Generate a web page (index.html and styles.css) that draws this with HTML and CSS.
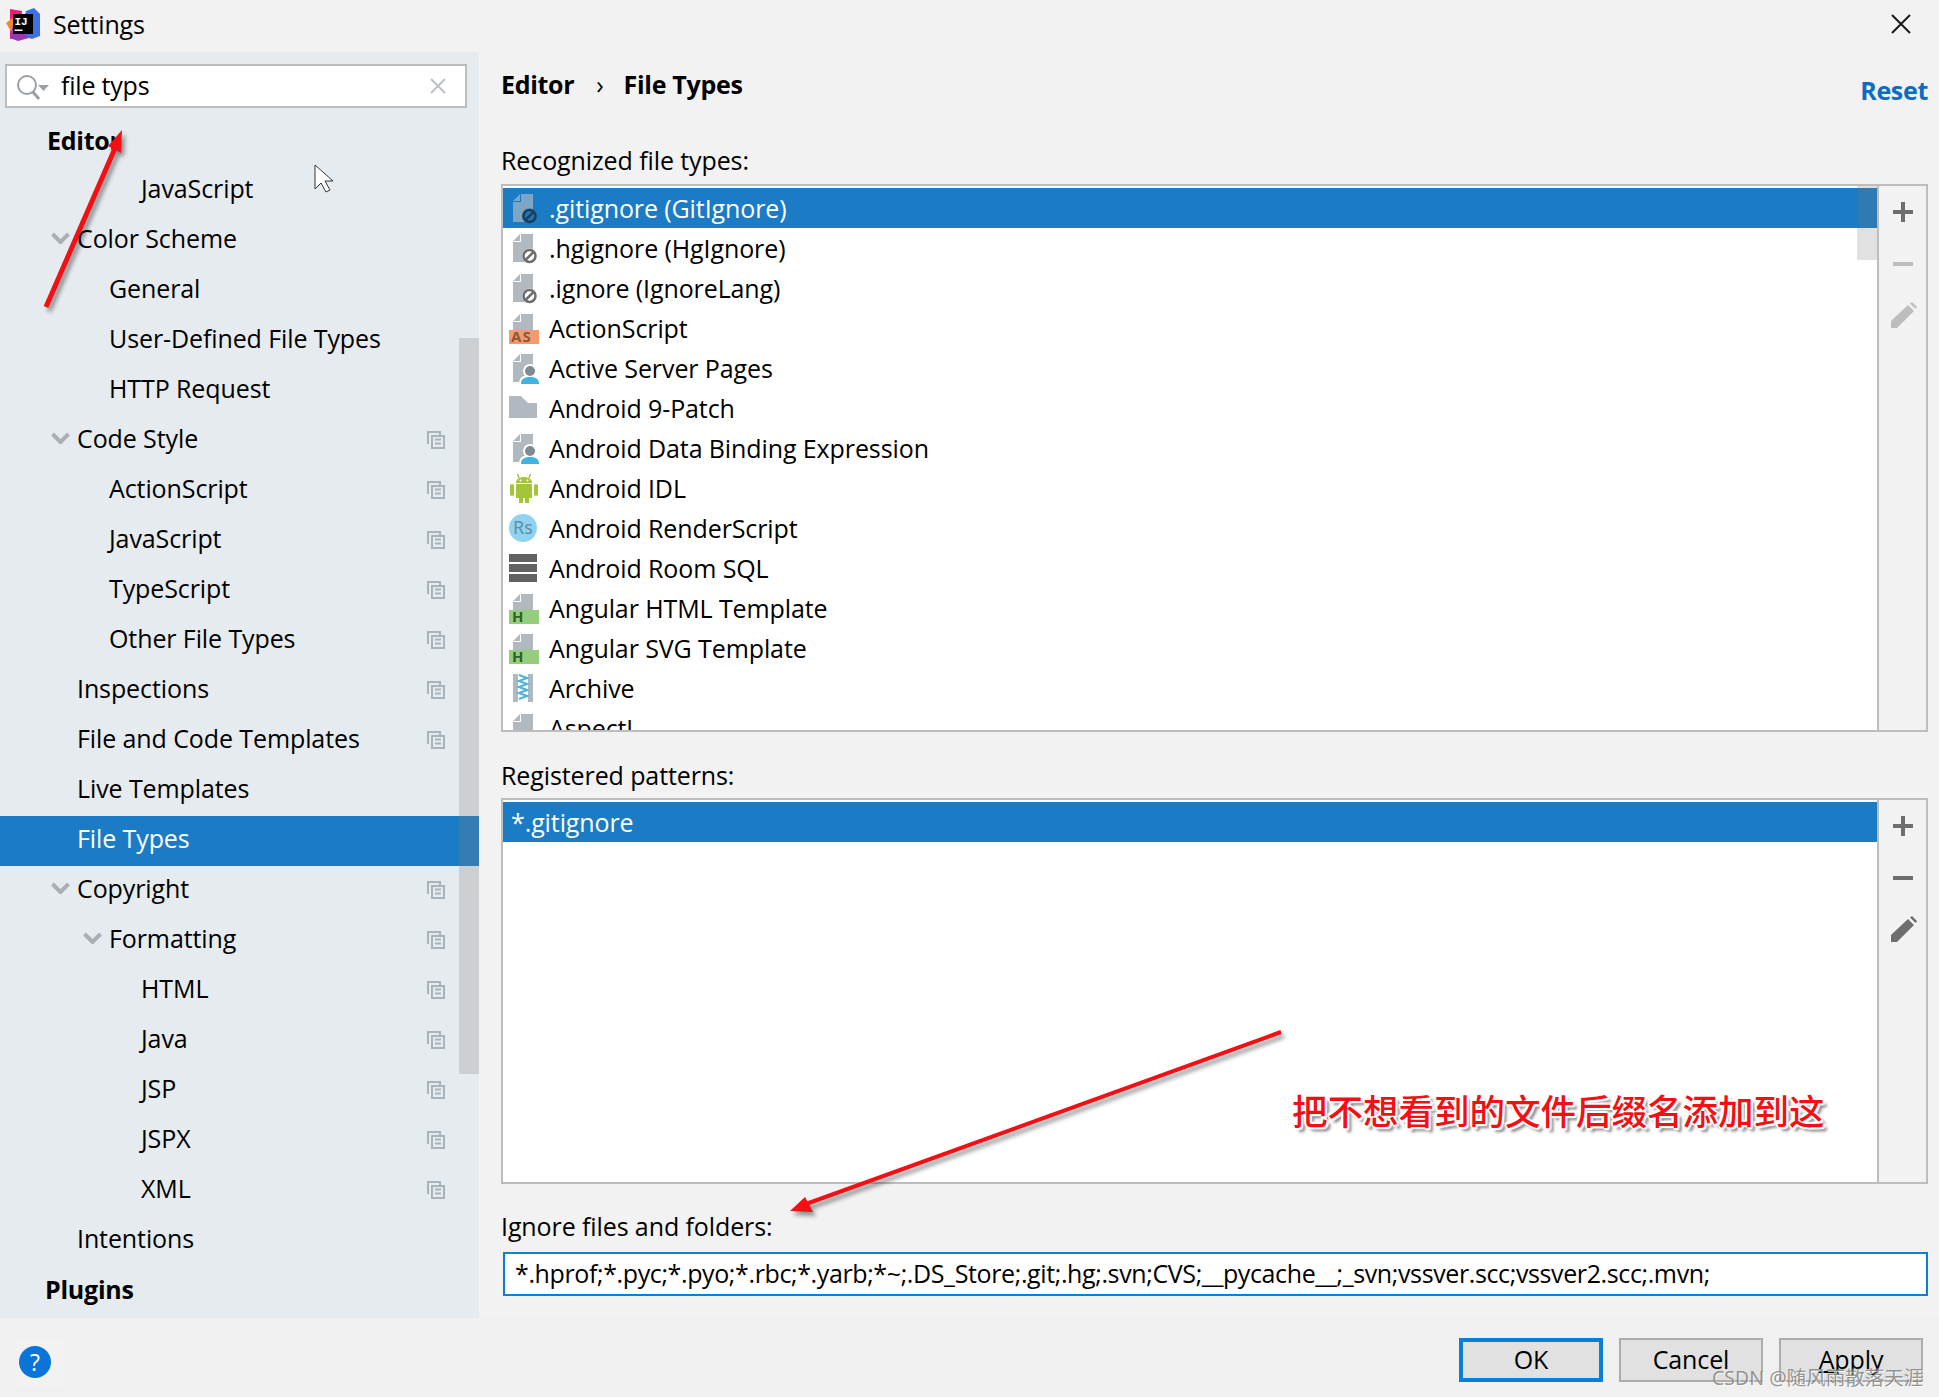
FILE: index.html
```html
<!DOCTYPE html>
<html lang="en">
<head>
<meta charset="utf-8">
<title>Settings</title>
<link rel="stylesheet" href="styles.css">
</head>
<body>
<svg class="defs" width="0" height="0" aria-hidden="true">
  <defs>
    <symbol id="copy" viewBox="0 0 18 18">
      <path d="M1 13V1h12v3M5 5h12v12H5z" fill="none" stroke="#a8b4bb" stroke-width="2"/>
      <path d="M8 8.5h6M8 12.5h6" stroke="#a8b4bb" stroke-width="2"/>
    </symbol>
    <symbol id="chev" viewBox="0 0 19 12">
      <path d="M1.5 2l8 8 8-8" fill="none" stroke="#a9afb5" stroke-width="4"/>
    </symbol>
    <symbol id="plus" viewBox="0 0 20 20"><path d="M10 0v20M0 10h20" stroke="currentColor" stroke-width="4"/></symbol>
    <symbol id="minus" viewBox="0 0 20 20"><path d="M0 10h20" stroke="currentColor" stroke-width="4"/></symbol>
    <symbol id="pencil" viewBox="0 0 26 26"><path d="M0 19L17 3l6 6L6 26H0zM19 1.500l2-1.500 5 5-1.500 2z" fill="currentColor"/></symbol>
    <symbol id="file" viewBox="0 0 30 32">
      <path d="M4 7l7-7v7zM12 0h12v28H4V8h8z" fill="#b0b9bf"/>
    </symbol>
    <symbol id="ban" viewBox="0 0 30 32">
      <path d="M4 7l7-7v7zM12 0h12v28H4V8h8z" fill="#b0b9bf"/>
      <circle cx="20.500" cy="22" r="7.500" fill="#fff"/>
      <circle cx="20.500" cy="22" r="6" fill="none" stroke="#6e6e6e" stroke-width="2.500"/>
      <path d="M16.500 26l8-8" stroke="#6e6e6e" stroke-width="2.500"/>
    </symbol>
    <symbol id="bansel" viewBox="0 0 30 32">
      <path d="M4 7l7-7v7zM12 0h12v28H4V8h8z" fill="#7fa5c4"/>
      <circle cx="20.500" cy="22" r="7.500" fill="#1a7ac4"/>
      <circle cx="20.500" cy="22" r="6" fill="none" stroke="#1d3f5a" stroke-width="2.500"/>
      <path d="M16.500 26l8-8" stroke="#1d3f5a" stroke-width="2.500"/>
    </symbol>
    <symbol id="person" viewBox="0 0 30 32">
      <path d="M4 7l7-7v7zM12 0h12v28H4V8h8z" fill="#b0b9bf"/>
      <circle cx="21" cy="17" r="7" fill="#fff"/>
      <path d="M10 30c0-7 4-9 11-9s9 2 9 9z" fill="#fff"/>
      <circle cx="21" cy="17" r="5" fill="#7f8b91"/>
      <path d="M12 30c0-5 3-7 9-7s9 2 9 7z" fill="#3fb4e0"/>
    </symbol>
    <symbol id="folder" viewBox="0 0 30 32">
      <path d="M0 2h12l7 7h9v15H0z" fill="#b0b9bf"/>
    </symbol>
    <symbol id="android" viewBox="0 0 30 32">
      <g fill="#a4c439">
        <path d="M7 9c0-4 4-6 8-6s8 2 8 6z"/>
        <path d="M7 10h16v14h-3v5h-4v-5h-2v5h-4v-5H7z" />
        <rect x="1" y="10" width="4" height="12" rx="2"/>
        <rect x="25" y="10" width="4" height="12" rx="2"/>
      </g>
      <path d="M10 4L8.500 0M20 4l1.500-4" stroke="#a4c439" stroke-width="1.500"/>
      <circle cx="11.500" cy="6.500" r="1" fill="#fff"/><circle cx="18.500" cy="6.500" r="1" fill="#fff"/>
    </symbol>
    <symbol id="rooms" viewBox="0 0 30 32">
      <path d="M0 0h28v8H0zM0 10h28v8H0zM0 20h28v8H0z" fill="#616161"/>
    </symbol>
    <symbol id="zip" viewBox="0 0 30 32">
      <path d="M4 0h20v28H4z" fill="#b0b9bf"/>
      <path d="M9 0h10v28H9z" fill="#fff"/>
      <path d="M10 1l8 3-8 3 8 3-8 3 8 3-8 3 8 3-8 3" fill="none" stroke="#4db4dc" stroke-width="2.200"/>
    </symbol>
  </defs>
</svg>

<div class="dialog">
  <header class="titlebar">
    <svg class="logo" width="34" height="34" viewBox="0 0 34 34" aria-hidden="true">
      <path d="M4 2l12 2-2 26-10 2z" fill="#e6207a"/>
      <path d="M0 16l8-6 4 12-6 4z" fill="#f28a22"/>
      <path d="M20 4l8-3 6 6v22l-8 3-12-4z" fill="#3f6fe4"/>
      <path d="M4 31l3-14 16 14-11 3z" fill="#9a35b8"/>
      <rect x="7" y="7" width="20" height="20" fill="#000"/>
      <text class="logo-text" x="8.500" y="18">IJ</text>
      <rect x="8.500" y="22.500" width="8" height="1.500" fill="#fff"/>
    </svg>
    <span class="title">Settings</span>
    <svg class="close" width="20" height="20" viewBox="0 0 20 20" aria-hidden="true"><path d="M1 1l18 18M19 1L1 19" stroke="#1a1a1a" stroke-width="2"/></svg>
  </header>

  <div class="content">
    <aside class="sidebar">
      <div class="search">
        <svg class="search-icon" width="34" height="28" viewBox="0 0 34 28" aria-hidden="true">
          <circle cx="11" cy="11" r="9" fill="none" stroke="#9aa0a4" stroke-width="2"/>
          <path d="M17 18l6 7" stroke="#9aa0a4" stroke-width="3"/>
          <path d="M22 11h11l-5.500 6z" fill="#9aa0a4"/>
        </svg>
        <span class="search-text">file typs</span>
        <svg class="search-clear" width="16" height="16" viewBox="0 0 16 16" aria-hidden="true"><path d="M1 1l14 14M15 1L1 15" stroke="#bcc1c4" stroke-width="2"/></svg>
      </div>
      <div class="tree">
        <div class="row bold l0a">Editor</div>
        <div class="row l3">JavaScript</div>
        <div class="row l1"><svg class="chev"><use href="#chev"/></svg>Color Scheme</div>
        <div class="row l2">General</div>
        <div class="row l2">User-Defined File Types</div>
        <div class="row l2">HTTP Request</div>
        <div class="row l1"><svg class="chev"><use href="#chev"/></svg>Code Style<svg class="copy"><use href="#copy"/></svg></div>
        <div class="row l2">ActionScript<svg class="copy"><use href="#copy"/></svg></div>
        <div class="row l2">JavaScript<svg class="copy"><use href="#copy"/></svg></div>
        <div class="row l2">TypeScript<svg class="copy"><use href="#copy"/></svg></div>
        <div class="row l2">Other File Types<svg class="copy"><use href="#copy"/></svg></div>
        <div class="row l1">Inspections<svg class="copy"><use href="#copy"/></svg></div>
        <div class="row l1">File and Code Templates<svg class="copy"><use href="#copy"/></svg></div>
        <div class="row l1">Live Templates</div>
        <div class="row l1 selected">File Types</div>
        <div class="row l1"><svg class="chev"><use href="#chev"/></svg>Copyright<svg class="copy"><use href="#copy"/></svg></div>
        <div class="row l2"><svg class="chev"><use href="#chev"/></svg>Formatting<svg class="copy"><use href="#copy"/></svg></div>
        <div class="row l3">HTML<svg class="copy"><use href="#copy"/></svg></div>
        <div class="row l3">Java<svg class="copy"><use href="#copy"/></svg></div>
        <div class="row l3">JSP<svg class="copy"><use href="#copy"/></svg></div>
        <div class="row l3">JSPX<svg class="copy"><use href="#copy"/></svg></div>
        <div class="row l3">XML<svg class="copy"><use href="#copy"/></svg></div>
        <div class="row l1">Intentions</div>
        <div class="row bold l0">Plugins</div>
      </div>
      <div class="side-scroll"></div>
    </aside>

    <main class="main">
      <div class="head">
        <div class="crumbs"><span>Editor</span><span class="crumb-sep">›</span><span>File Types</span></div>
        <span class="reset">Reset</span>
      </div>

      <div class="label first">Recognized file types:</div>
      <div class="box types">
        <div class="list">
          <div class="item sel"><svg class="ico"><use href="#bansel"/></svg>.gitignore (GitIgnore)</div>
          <div class="item"><svg class="ico"><use href="#ban"/></svg>.hgignore (HgIgnore)</div>
          <div class="item"><svg class="ico"><use href="#ban"/></svg>.ignore (IgnoreLang)</div>
          <div class="item">
            <svg class="ico" viewBox="0 0 30 32"><path d="M4 7l7-7v7zM12 0h12v16H4V8h8z" fill="#b0b9bf"/><rect y="16" width="30" height="14" fill="#f59a6f"/><text class="badge as" x="2" y="28">AS</text></svg>ActionScript</div>
          <div class="item"><svg class="ico"><use href="#person"/></svg>Active Server Pages</div>
          <div class="item"><svg class="ico"><use href="#folder"/></svg>Android 9-Patch</div>
          <div class="item"><svg class="ico"><use href="#person"/></svg>Android Data Binding Expression</div>
          <div class="item"><svg class="ico"><use href="#android"/></svg>Android IDL</div>
          <div class="item">
            <svg class="ico" viewBox="0 0 30 32"><circle cx="14" cy="14" r="14" fill="#8fd3ef"/><text class="rs" x="4" y="20">Rs</text></svg>Android RenderScript</div>
          <div class="item"><svg class="ico"><use href="#rooms"/></svg>Android Room SQL</div>
          <div class="item">
            <svg class="ico" viewBox="0 0 30 32"><path d="M4 7l7-7v7zM12 0h12v16H4V8h8z" fill="#b0b9bf"/><rect y="16" width="30" height="14" fill="#95cd7d"/><text class="badge h" x="3" y="28">H</text></svg>Angular HTML Template</div>
          <div class="item">
            <svg class="ico" viewBox="0 0 30 32"><path d="M4 7l7-7v7zM12 0h12v16H4V8h8z" fill="#b0b9bf"/><rect y="16" width="30" height="14" fill="#95cd7d"/><text class="badge h" x="3" y="28">H</text></svg>Angular SVG Template</div>
          <div class="item"><svg class="ico"><use href="#zip"/></svg>Archive</div>
          <div class="item"><svg class="ico"><use href="#file"/></svg>AspectJ</div>
          <div class="list-scroll"></div>
        </div>
        <div class="tools">
          <svg class="tool t-plus"><use href="#plus"/></svg>
          <svg class="tool t-minus off"><use href="#minus"/></svg>
          <svg class="tool t-pencil off"><use href="#pencil"/></svg>
        </div>
      </div>

      <div class="label">Registered patterns:</div>
      <div class="box patterns">
        <div class="list">
          <div class="item sel plain">*.gitignore</div>
        </div>
        <div class="tools">
          <svg class="tool t-plus"><use href="#plus"/></svg>
          <svg class="tool t-minus"><use href="#minus"/></svg>
          <svg class="tool t-pencil"><use href="#pencil"/></svg>
        </div>
      </div>

      <div class="label ignore">Ignore files and folders:</div>
      <div class="field">*.hprof;*.pyc;*.pyo;*.rbc;*.yarb;*~;.DS_Store;.git;.hg;.svn;CVS;__pycache__;_svn;vssver.scc;vssver2.scc;.mvn;</div>
    </main>
  </div>

  <footer class="footer">
    <div class="help"><span class="help-dot">?</span></div>
    <div class="buttons">
      <span class="btn primary">OK</span>
      <span class="btn">Cancel</span>
      <span class="btn"><u>A</u>pply</span>
    </div>
  </footer>

  <svg class="marks" width="1939" height="1397" viewBox="0 0 1939 1397" aria-hidden="true">
    <g class="arrow">
      <path d="M46 307L116 146" stroke="#f30f13" stroke-width="5" fill="none"/>
      <path d="M122 130L108 146 121 153z" fill="#f30f13"/>
      <path d="M1281 1032L806 1204" stroke="#f30f13" stroke-width="4" fill="none"/>
      <path d="M790 1211L805 1197 813 1212z" fill="#f30f13"/>
    </g>
    <path class="cursor" d="M315 165v24l6-6 5 9 4-2-5-9h8z"/>
  </svg>
  <div class="note">把不想看到的文件后缀名添加到这</div>
  <div class="watermark">CSDN @随风雨散落天涯</div>
</div>
</body>
</html>
```
FILE: styles.css
```css
* { box-sizing: border-box; }
html, body { margin: 0; padding: 0; }
body {
  width: 1939px;
  height: 1397px;
  overflow: hidden;
  background: #f2f2f2;
  color: #000;
  font-family: "Open Sans", "Noto Sans", "Noto Sans CJK SC", sans-serif;
  font-size: 25px;
  letter-spacing: -0.1px;
}
.defs { position: absolute; }
.dialog {
  position: relative;
  width: 1939px;
  height: 1397px;
  display: flex;
  flex-direction: column;
}

/* title bar */
.titlebar {
  height: 52px;
  flex: none;
  display: flex;
  align-items: center;
  padding: 0 28px 4px 6px;
}
.logo { flex: none; }
.logo-text { font: bold 11px "Liberation Mono", monospace; fill: #fff; letter-spacing: 0; }
.title { margin-left: 13px; }
.close { margin-left: auto; }

/* content */
.content { flex: none; height: 1266px; display: flex; }
.sidebar {
  position: relative;
  width: 479px;
  flex: none;
  background: #e6ebef;
  padding-top: 12px;
}
.search {
  width: 462px;
  height: 44px;
  margin-left: 5px;
  border: 2px solid #bdbdbd;
  background: #fff;
  display: flex;
  align-items: center;
  padding: 0 19px 0 9px;
}
.search-icon { flex: none; margin-top: 4px; }
.search-text { margin-left: 11px; padding-bottom: 2px; letter-spacing: -0.2px; }
.search-clear { margin-left: auto; }
.tree { padding-top: 8px; }
.row {
  height: 50px;
  display: flex;
  align-items: center;
  padding-right: 34px;
  padding-bottom: 6px;
  white-space: nowrap;
}
.row.l0a { padding-left: 47px; padding-bottom: 2px; }
.row.l0 { padding-left: 45px; padding-bottom: 4px; }
.row.l1 { padding-left: 77px; }
.row.l2 { padding-left: 109px; }
.row.l3 { padding-left: 141px; }
.bold { font-weight: 700; letter-spacing: -0.25px; }
.selected { background: #1b7bc4; color: #fff; }
.chev { width: 19px; height: 12px; flex: none; margin-left: -26px; margin-right: 7px; }
.copy { width: 18px; height: 18px; flex: none; margin-left: auto; margin-top: 3px; }
.side-scroll {
  position: absolute;
  right: 0;
  top: 286px;
  width: 20px;
  height: 736px;
  background: rgba(128, 128, 128, 0.25);
}

/* main */
.main { flex: 1; padding: 0 11px 0 22px; min-width: 0; }
.head { display: flex; justify-content: space-between; height: 50px; padding-top: 15px; }
.crumbs { display: flex; font-weight: 700; letter-spacing: -0.3px; }
.crumb-sep { font-weight: 400; margin: 0 20px 0 22px; }
.reset { font-weight: 700; letter-spacing: -0.3px; color: #0a6cc4; margin-top: 6px; }
.label { height: 34px; line-height: 34px; white-space: nowrap; margin-top: 26px; margin-bottom: 6px; }
.main > .label.first { margin-top: 41px; margin-bottom: 7px; }
.box {
  width: 1427px;
  display: flex;
  border: 2px solid #bdbdbd;
}
.types { height: 548px; }
.patterns { height: 386px; }
.list {
  position: relative;
  flex: 1;
  min-width: 0;
  overflow: hidden;
  background: #fff;
  padding-top: 2px;
  border-right: 2px solid #bdbdbd;
}
.item {
  height: 40px;
  line-height: 40px;
  display: flex;
  align-items: center;
  padding-left: 6px;
  white-space: nowrap;
}
.item.plain { padding-left: 8px; }
.item.sel { background: #1b7bc4; color: #fff; }
.ico { width: 30px; height: 32px; flex: none; margin-right: 10px; margin-top: 4px; }
.badge { font: 700 15px "Noto Sans", sans-serif; letter-spacing: 1px; }
.as { fill: #8a5a3a; }
.h { fill: #2f5f2a; }
.rs { font: 400 18px "Noto Sans", sans-serif; fill: #5f8fa5; letter-spacing: 0; }
.list-scroll {
  position: absolute;
  right: 0;
  top: 0;
  width: 20px;
  height: 74px;
  background: rgba(120, 120, 120, 0.22);
}
.tools { width: 47px; flex: none; display: flex; flex-direction: column; align-items: center; padding-top: 16px; color: #6e6e6e; }
.tool { flex: none; }
.tool.off { color: #bdbdbd; }
.t-plus { width: 20px; height: 20px; }
.t-minus { width: 20px; height: 20px; margin-top: 32px; }
.t-pencil { width: 26px; height: 26px; margin-top: 28px; margin-left: 2px; }
.label.ignore { margin-top: 25px; margin-bottom: 9px; }
.field {
  width: 1425px;
  height: 44px;
  margin-left: 2px;
  border: 2px solid #0a7fd6;
  background: #fff;
  display: flex;
  align-items: center;
  padding: 0 0 2px 10px;
  white-space: nowrap;
  letter-spacing: -0.38px;
}

/* footer */
.footer {
  flex: 1;
  background: #f0f0f0;
  display: flex;
  align-items: flex-start;
  justify-content: space-between;
  padding: 20px 16px 0 17px;
}
.help {
  width: 48px;
  height: 48px;
  background: #f2f2f2;
  display: flex;
  align-items: center;
  padding-left: 2px;
}
.help-dot {
  width: 32px;
  height: 32px;
  border-radius: 50%;
  background: #0a74d8;
  color: #fff;
  font-size: 23px;
  line-height: 32px;
  text-align: center;
  letter-spacing: 0;
}
.buttons { display: flex; gap: 16px; }
.btn {
  width: 144px;
  height: 44px;
  background: #e1e1e1;
  border: 2px solid #adadad;
  display: flex;
  align-items: center;
  justify-content: center;
  padding-bottom: 2px;
}
.btn.primary { border: 4px solid #0a7fd6; }

/* annotations */
.marks { position: absolute; left: 0; top: 0; z-index: 5; pointer-events: none; }
.arrow { filter: drop-shadow(3px 4px 2px rgba(0, 0, 0, 0.4)); }
.cursor { fill: #fff; stroke: #333; stroke-width: 1; }
.note {
  position: absolute;
  z-index: 6;
  left: 1292px;
  top: 1086px;
  font-family: "Noto Sans CJK SC", sans-serif;
  font-weight: 500;
  font-size: 35.5px;
  line-height: 48px;
  letter-spacing: 0;
  color: #f30f13;
  white-space: nowrap;
  text-shadow: -2px 0 1px #fff, 2px 0 1px #fff, 0 -2px 1px #fff, 0 2px 1px #fff, 2px 2px 1px #fff, -2px -2px 1px #fff, 4px 4px 3px rgba(0, 0, 0, 0.5);
}
.watermark {
  position: absolute;
  z-index: 6;
  left: 1712px;
  top: 1364px;
  font-family: "Noto Sans", "Noto Sans CJK SC", sans-serif;
  font-size: 19.5px;
  line-height: 28px;
  letter-spacing: 0;
  color: rgba(125, 125, 125, 0.8);
  white-space: nowrap;
  text-shadow: 1px 1px 0 rgba(255, 255, 255, 0.7);
}
```
